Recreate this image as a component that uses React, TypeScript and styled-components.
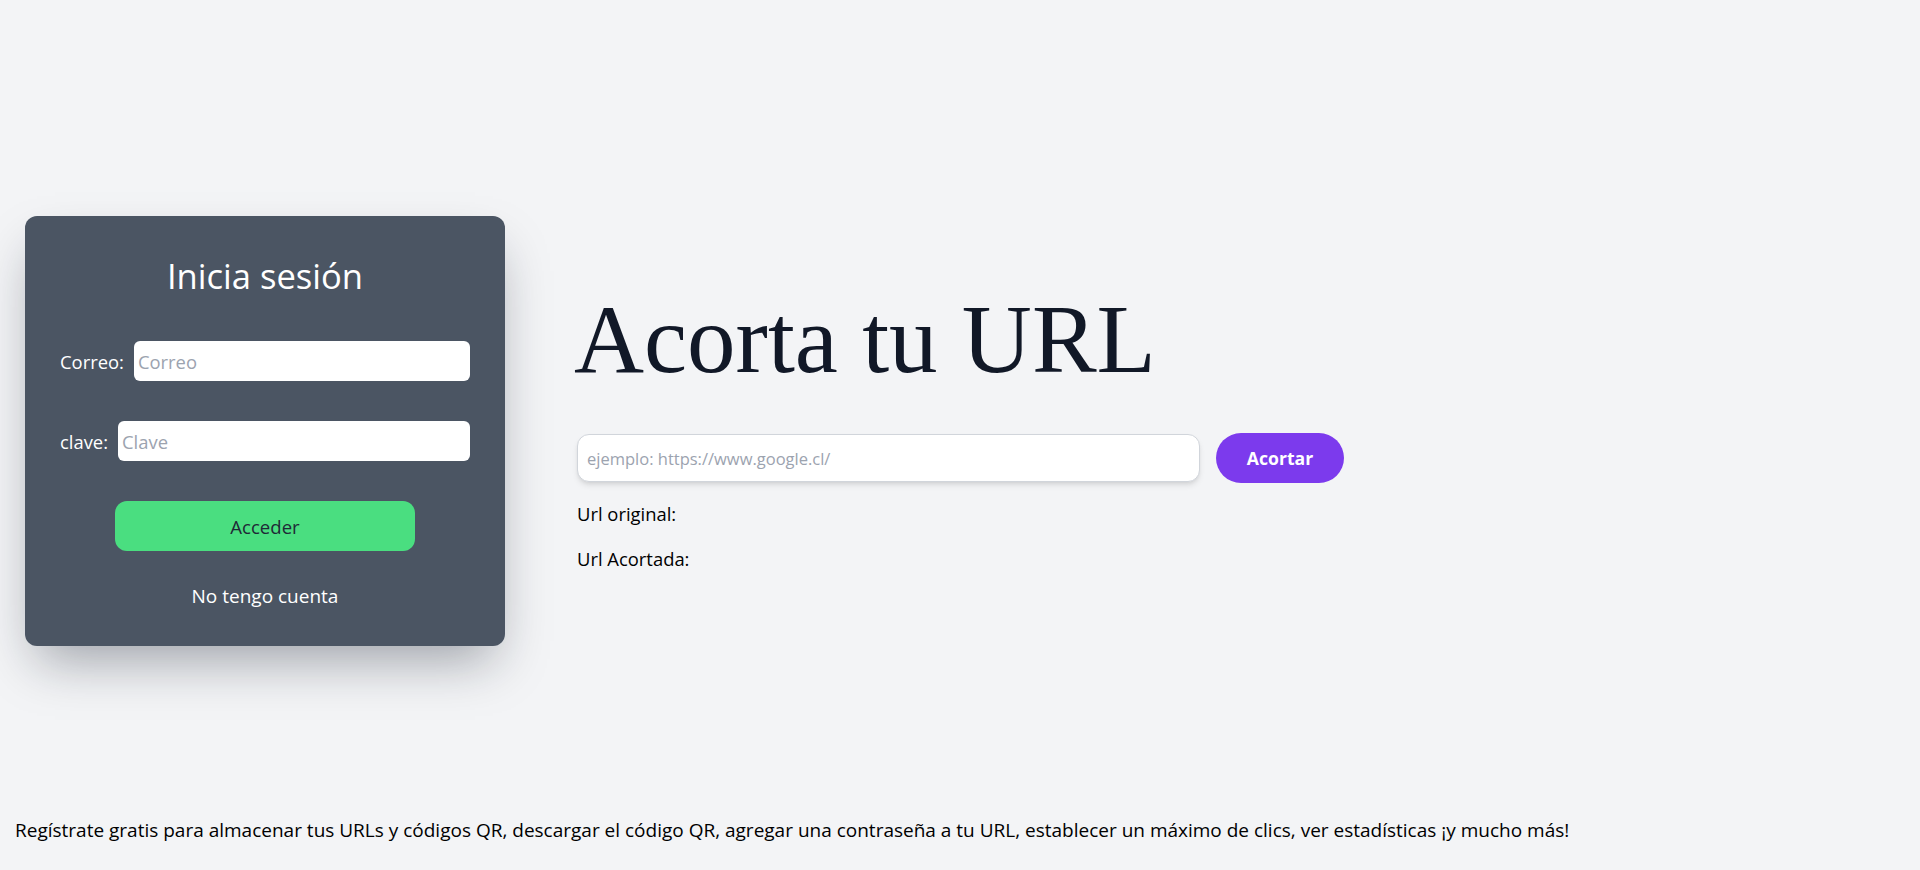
import React from "react";
import styled, { createGlobalStyle } from "styled-components";

const GlobalStyle = createGlobalStyle`
  * { box-sizing: border-box; }
  html, body { margin: 0; padding: 0; }
  body {
    background: #f3f4f6;
    font-family: "Open Sans", "Noto Sans", sans-serif;
    color: #000;
  }
  input::placeholder { color: #9ca3af; opacity: 1; }
`;

const Page = styled.div`
  height: 870px;
  display: flex;
  flex-direction: column;
`;

const Main = styled.main`
  display: flex;
  align-items: flex-start;
  padding: 216px 0 0 25px;
`;

const Card = styled.section`
  width: 480px;
  height: 430px;
  padding: 38px 35px 0;
  background: #4b5563;
  border-radius: 12px;
  box-shadow: 0 25px 50px -12px rgba(17, 24, 39, 0.38);
  display: flex;
  flex-direction: column;
  align-items: center;
  color: #fff;
`;

const CardTitle = styled.h2`
  margin: 0;
  font-size: 34.6px;
  line-height: 44px;
  font-weight: 400;
  color: #fff;
`;

const Form = styled.form`
  margin-top: 43px;
  width: 100%;
  display: flex;
  flex-direction: column;
  align-items: center;
  gap: 40px;
`;

const Field = styled.label`
  width: 100%;
  display: flex;
  align-items: center;
  gap: 10px;
  font-size: 18.4px;
  color: #fff;
`;

const FieldInput = styled.input`
  flex: 1;
  min-width: 0;
  height: 40px;
  border: none;
  border-radius: 6px;
  background: #fff;
  padding: 0 4px;
  font-family: inherit;
  font-size: 18.4px;
  color: #111827;
  outline: none;
`;

const SubmitButton = styled.button`
  width: 300px;
  height: 50px;
  border: none;
  border-radius: 12px;
  background: #4ade80;
  color: #1f2937;
  font-family: inherit;
  font-size: 18.6px;
  cursor: pointer;
`;

const SignupLink = styled.a`
  margin-top: 32px;
  font-size: 19px;
  line-height: 26px;
  color: #fff;
  text-decoration: none;
  cursor: pointer;
`;

const Shortener = styled.section`
  margin-left: 72px;
  margin-top: 76px;
  display: flex;
  flex-direction: column;
`;

const Heading = styled.h1`
  margin: 0 0 0 -3px;
  font-family: "Liberation Serif", "Times New Roman", serif;
  font-size: 97px;
  line-height: 96px;
  font-weight: 400;
  color: #111827;
`;

const UrlRow = styled.div`
  margin-top: 45px;
  display: flex;
  align-items: center;
  gap: 16px;
`;

const UrlInput = styled.input`
  width: 623px;
  height: 48px;
  border: 1px solid #d1d5db;
  border-radius: 12px;
  background: #fff;
  padding: 0 9px;
  font-family: inherit;
  font-size: 16.5px;
  box-shadow: 0 4px 6px -1px rgba(0, 0, 0, 0.1), 0 2px 4px -2px rgba(0, 0, 0, 0.1);
  outline: none;
`;

const ShortenButton = styled.button`
  width: 128px;
  height: 50px;
  border: none;
  border-radius: 9999px;
  background: #7c3aed;
  color: #fff;
  font-family: inherit;
  font-size: 17.6px;
  font-weight: 700;
  cursor: pointer;
`;

const ResultLine = styled.p`
  margin: 17px 0 0;
  font-size: 18.4px;
  line-height: 28px;
  color: #000;
`;

const Footer = styled.footer`
  margin-top: auto;
  padding: 0 15px 27px;
  font-size: 19px;
  line-height: 26px;
  color: #000;
`;

export default function App() {
  return (
    <>
      <GlobalStyle />
      <Page>
        <Main>
          <Card>
            <CardTitle>Inicia sesión</CardTitle>
            <Form onSubmit={(e) => e.preventDefault()}>
              <Field>
                Correo:
                <FieldInput type="email" placeholder="Correo" />
              </Field>
              <Field>
                clave:
                <FieldInput type="password" placeholder="Clave" />
              </Field>
              <SubmitButton type="submit">Acceder</SubmitButton>
            </Form>
            <SignupLink>No tengo cuenta</SignupLink>
          </Card>
          <Shortener>
            <Heading>Acorta tu URL</Heading>
            <UrlRow>
              <UrlInput type="text" placeholder="ejemplo: https://www.google.cl/" />
              <ShortenButton type="button">Acortar</ShortenButton>
            </UrlRow>
            <ResultLine>Url original:</ResultLine>
            <ResultLine>Url Acortada:</ResultLine>
          </Shortener>
        </Main>
        <Footer>
          Regístrate gratis para almacenar tus URLs y códigos QR, descargar el código QR, agregar una
          contraseña a tu URL, establecer un máximo de clics, ver estadísticas ¡y mucho más!
        </Footer>
      </Page>
    </>
  );
}
